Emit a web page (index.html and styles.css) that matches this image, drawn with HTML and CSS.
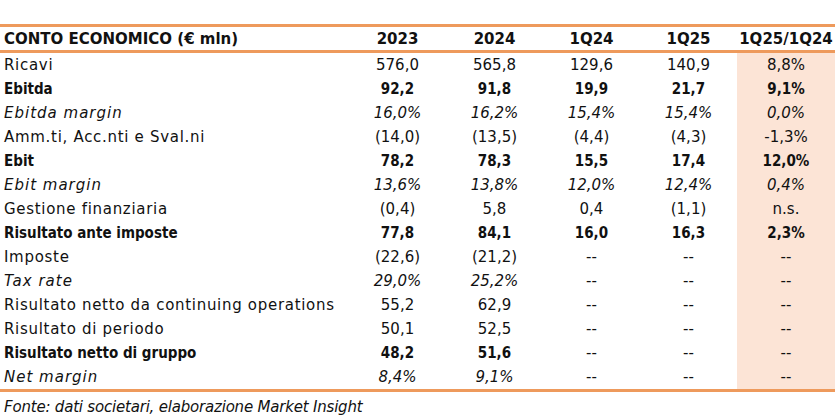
FILE: index.html
```html
<!DOCTYPE html>
<html lang="it">
<head>
<meta charset="utf-8">
<title>Conto economico</title>
<link rel="stylesheet" href="styles.css">
</head>
<body>
<div class="page">
  <table class="ce">
    <colgroup>
      <col class="c-label"><col class="c-num"><col class="c-num"><col class="c-num"><col class="c-num"><col class="c-last">
    </colgroup>
    <thead>
      <tr><th class="lbl">CONTO ECONOMICO (€ mln)</th><th>2023</th><th>2024</th><th>1Q24</th><th>1Q25</th><th>1Q25/1Q24</th></tr>
    </thead>
    <tbody>
      <tr><td class="lbl">Ricavi</td><td>576,0</td><td>565,8</td><td>129,6</td><td>140,9</td><td class="hl">8,8%</td></tr>
      <tr class="b"><td class="lbl">Ebitda</td><td>92,2</td><td>91,8</td><td>19,9</td><td>21,7</td><td class="hl">9,1%</td></tr>
      <tr class="i"><td class="lbl">Ebitda margin</td><td>16,0%</td><td>16,2%</td><td>15,4%</td><td>15,4%</td><td class="hl">0,0%</td></tr>
      <tr><td class="lbl">Amm.ti, Acc.nti e Sval.ni</td><td>(14,0)</td><td>(13,5)</td><td>(4,4)</td><td>(4,3)</td><td class="hl">-1,3%</td></tr>
      <tr class="b"><td class="lbl">Ebit</td><td>78,2</td><td>78,3</td><td>15,5</td><td>17,4</td><td class="hl">12,0%</td></tr>
      <tr class="i"><td class="lbl">Ebit margin</td><td>13,6%</td><td>13,8%</td><td>12,0%</td><td>12,4%</td><td class="hl">0,4%</td></tr>
      <tr><td class="lbl">Gestione finanziaria</td><td>(0,4)</td><td>5,8</td><td>0,4</td><td>(1,1)</td><td class="hl">n.s.</td></tr>
      <tr class="b"><td class="lbl">Risultato ante imposte</td><td>77,8</td><td>84,1</td><td>16,0</td><td>16,3</td><td class="hl">2,3%</td></tr>
      <tr><td class="lbl">Imposte</td><td>(22,6)</td><td>(21,2)</td><td>--</td><td>--</td><td class="hl">--</td></tr>
      <tr class="i"><td class="lbl">Tax rate</td><td>29,0%</td><td>25,2%</td><td class="up">--</td><td class="up">--</td><td class="hl up">--</td></tr>
      <tr><td class="lbl">Risultato netto da continuing operations</td><td>55,2</td><td>62,9</td><td>--</td><td>--</td><td class="hl">--</td></tr>
      <tr><td class="lbl">Risultato di periodo</td><td>50,1</td><td>52,5</td><td>--</td><td>--</td><td class="hl">--</td></tr>
      <tr class="b"><td class="lbl">Risultato netto di gruppo</td><td>48,2</td><td>51,6</td><td class="nb">--</td><td class="nb">--</td><td class="hl nb">--</td></tr>
      <tr class="i"><td class="lbl">Net margin</td><td>8,4%</td><td>9,1%</td><td class="up">--</td><td class="up">--</td><td class="hl up">--</td></tr>
    </tbody>
  </table>
  <p class="source">Fonte: dati societari, elaborazione Market Insight</p>
</div>
</body>
</html>
```
FILE: styles.css
```css
html, body {
  margin: 0;
  padding: 0;
  background: #ffffff;
}

.page {
  width: 835px;
  padding-top: 24px;
  font-family: "DejaVu Sans", "Liberation Sans", sans-serif;
  font-size: 15px;
  color: #111111;
}

.ce {
  width: 835px;
  border-collapse: collapse;
  table-layout: fixed;
  border-top: 3px solid #ee9a5c;
  border-bottom: 3px solid #ee9a5c;
}

.c-label { width: 349px; }
.c-num { width: 97px; }
.c-last { width: 98px; }

.ce th,
.ce td {
  padding: 0;
  text-align: center;
  white-space: nowrap;
  font-weight: normal;
  line-height: 18px;
}

.ce thead th {
  height: 23px;
  font-weight: bold;
  border-bottom: 3px solid #ee9a5c;
  vertical-align: middle;
}

.ce tbody td {
  height: 24px;
}

.ce .lbl {
  text-align: left;
  padding-left: 4px;
}

.ce tbody td.lbl {
  letter-spacing: 0.7px;
}

.ce tbody tr.i td.lbl {
  letter-spacing: 1px;
}

.ce tbody tr.b td {
  font-weight: bold;
  font-family: "DejaVu Sans Condensed", "DejaVu Sans", sans-serif;
}

.ce tbody tr.b td.lbl {
  letter-spacing: 0;
}

.ce tbody tr.i td {
  font-style: italic;
}

.ce tbody tr.i td.up {
  font-style: normal;
}

.ce tbody tr.b td.nb {
  font-weight: normal;
  font-family: "DejaVu Sans", sans-serif;
}

.ce td.hl {
  background: #fce4d6;
}

.source {
  margin: 6px 0 0 4px;
  font-style: italic;
  letter-spacing: -0.2px;
  line-height: 18px;
}
```
